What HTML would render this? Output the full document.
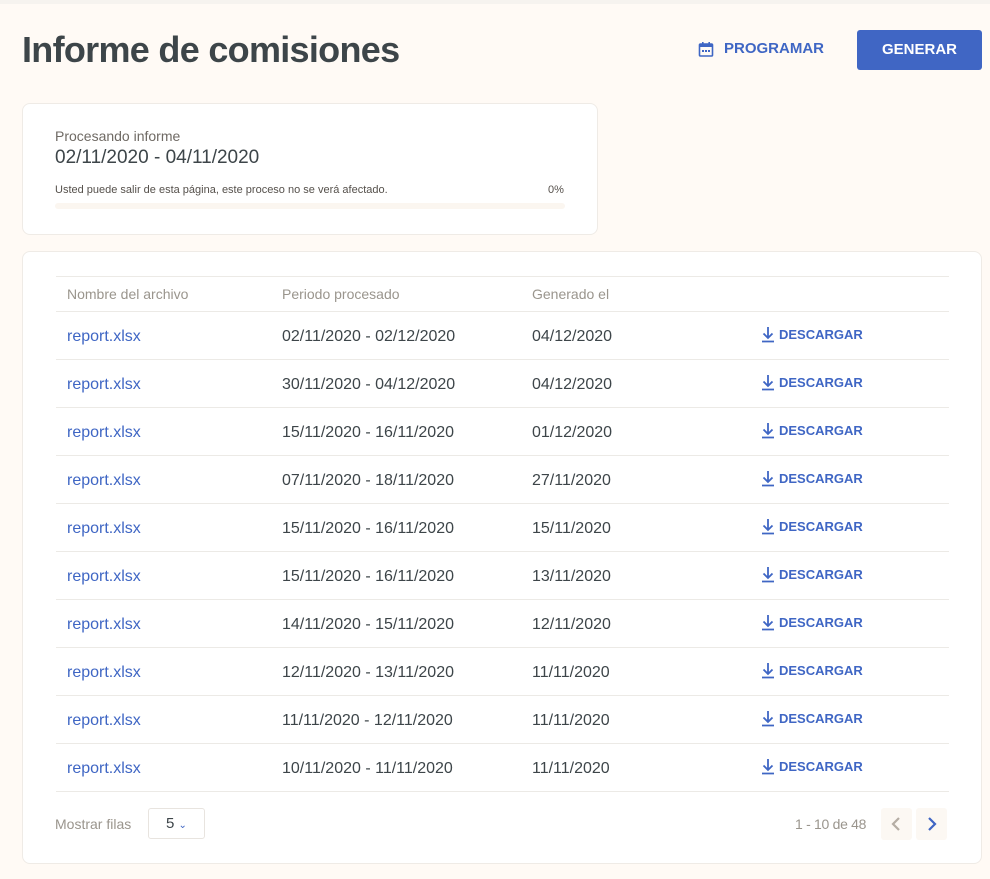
<!DOCTYPE html>
<html><head><meta charset="utf-8"><style>
*{box-sizing:border-box;margin:0;padding:0}
body{width:990px;height:879px;background:#fffaf5;font-family:"Liberation Sans",sans-serif;position:relative;overflow:hidden;color:#3d4549}
.top{position:absolute;left:0;top:0;width:990px;height:4px;background:#f6f3ef}
h1{position:absolute;left:22px;top:29px;font-size:36px;font-weight:bold;color:#3d4549;letter-spacing:-0.7px}
.prog{position:absolute;left:698px;top:40px;display:flex;align-items:center;color:#3f66c4;font-weight:bold;font-size:15px}
.gen{position:absolute;left:857px;top:30px;width:125px;height:40px;background:#4066c4;border-radius:3px;color:#fff;font-weight:bold;font-size:15px;text-align:center;line-height:40px}
.card{position:absolute;background:#fff;border:1px solid #efebe6;border-radius:8px}
.c1{left:22px;top:103px;width:576px;height:132px}
.c2{left:22px;top:251px;width:960px;height:613px}
.abs{position:absolute;white-space:nowrap}
.line{position:absolute;left:33px;width:893px;height:1px;background:#eceae6}
.hd{color:#9a958d;font-size:14px}
.r{font-size:16px;color:#3d4549}
.lnk{color:#3f66c4}
.dl{color:#3f66c4;font-weight:bold;font-size:13px;display:flex;align-items:center}
</style></head><body>
<div class="top"></div>
<h1>Informe de comisiones</h1>
<div class="prog"><svg width="16" height="16" viewBox="0 0 16 16" style="margin-right:10px"><rect x="1.5" y="3" width="13" height="12" rx="1" fill="none" stroke="#3f66c4" stroke-width="1.6"/><rect x="1.5" y="3" width="13" height="3" fill="#3f66c4"/><rect x="4" y="1" width="1.6" height="3" fill="#3f66c4"/><rect x="10.4" y="1" width="1.6" height="3" fill="#3f66c4"/><rect x="4" y="9" width="2" height="2" fill="#3f66c4"/><rect x="7" y="9" width="2" height="2" fill="#3f66c4"/><rect x="10" y="9" width="2" height="2" fill="#3f66c4"/></svg>PROGRAMAR</div>
<div class="gen">GENERAR</div>
<div class="card c1">
<div class="abs" style="left:32px;top:24px;font-size:14px;color:#6f6a64">Procesando informe</div>
<div class="abs" style="left:32px;top:43px;font-size:19px;color:#3d4549">02/11/2020 - 04/11/2020</div>
<div class="abs" style="left:32px;top:80px;font-size:11px;color:#55504b">Usted puede salir de esta página, este proceso no se verá afectado.</div>
<div class="abs" style="left:525px;top:80px;font-size:11px;color:#55504b">0%</div>
<div class="abs" style="left:32px;top:99px;width:510px;height:6px;background:#fbf6f0;border-radius:3px"></div>
</div>
<div class="card c2">
<div class="line" style="top:24px"></div>
<div class="abs hd" style="left:44px;top:34px">Nombre del archivo</div>
<div class="abs hd" style="left:259px;top:34px">Periodo procesado</div>
<div class="abs hd" style="left:509px;top:34px">Generado el</div>
<div class="line" style="top:59px"></div>
ROWS
</div>
<script>
const d=[["02/11/2020 - 02/12/2020","04/12/2020"],["30/11/2020 - 04/12/2020","04/12/2020"],["15/11/2020 - 16/11/2020","01/12/2020"],["07/11/2020 - 18/11/2020","27/11/2020"],["15/11/2020 - 16/11/2020","15/11/2020"],["15/11/2020 - 16/11/2020","13/11/2020"],["14/11/2020 - 15/11/2020","12/11/2020"],["12/11/2020 - 13/11/2020","11/11/2020"],["11/11/2020 - 12/11/2020","11/11/2020"],["10/11/2020 - 11/11/2020","11/11/2020"]];
let h='';d.forEach((r,i)=>{const t=60+i*48;h+=`<div class="abs r lnk" style="left:44px;top:${t+16}px">report.xlsx</div><div class="abs r" style="left:259px;top:${t+16}px">${r[0]}</div><div class="abs r" style="left:509px;top:${t+16}px">${r[1]}</div><div class="abs dl" style="left:737px;top:${t+14}px"><svg width="16" height="17" viewBox="0 0 16 17" style="margin-right:3px"><path d="M8 1v11M3.5 7.5L8 12l4.5-4.5M2 15.5h12" fill="none" stroke="#3f66c4" stroke-width="1.8"/></svg>DESCARGAR</div><div class="line" style="top:${t+47}px"></div>`});
h+=`<div class="abs" style="left:32px;top:564px;font-size:14px;color:#9a958d">Mostrar filas</div><div class="abs" style="left:125px;top:556px;width:57px;height:31px;border:1px solid #e8e4df;border-radius:3px;font-size:15px;color:#3d4549;padding:6px 0 0 17px">5 <span style="color:#3f66c4;font-size:10px">&#8964;</span></div><div class="abs" style="left:772px;top:564px;font-size:14px;color:#9a958d;letter-spacing:-0.3px">1 - 10 de 48</div><div class="abs" style="left:858px;top:556px;width:31px;height:32px;background:#fcf8f3;border-radius:3px"><svg width="31" height="32"><path d="M18 10l-6 6 6 6" fill="none" stroke="#b5ada4" stroke-width="2.2"/></svg></div><div class="abs" style="left:893px;top:556px;width:31px;height:32px;background:#fcf8f3;border-radius:3px"><svg width="31" height="32"><path d="M13 10l6 6-6 6" fill="none" stroke="#3f66c4" stroke-width="2.2"/></svg></div>`;
document.querySelector('.c2').innerHTML=document.querySelector('.c2').innerHTML.replace('ROWS',h);
</script>
</body></html>
